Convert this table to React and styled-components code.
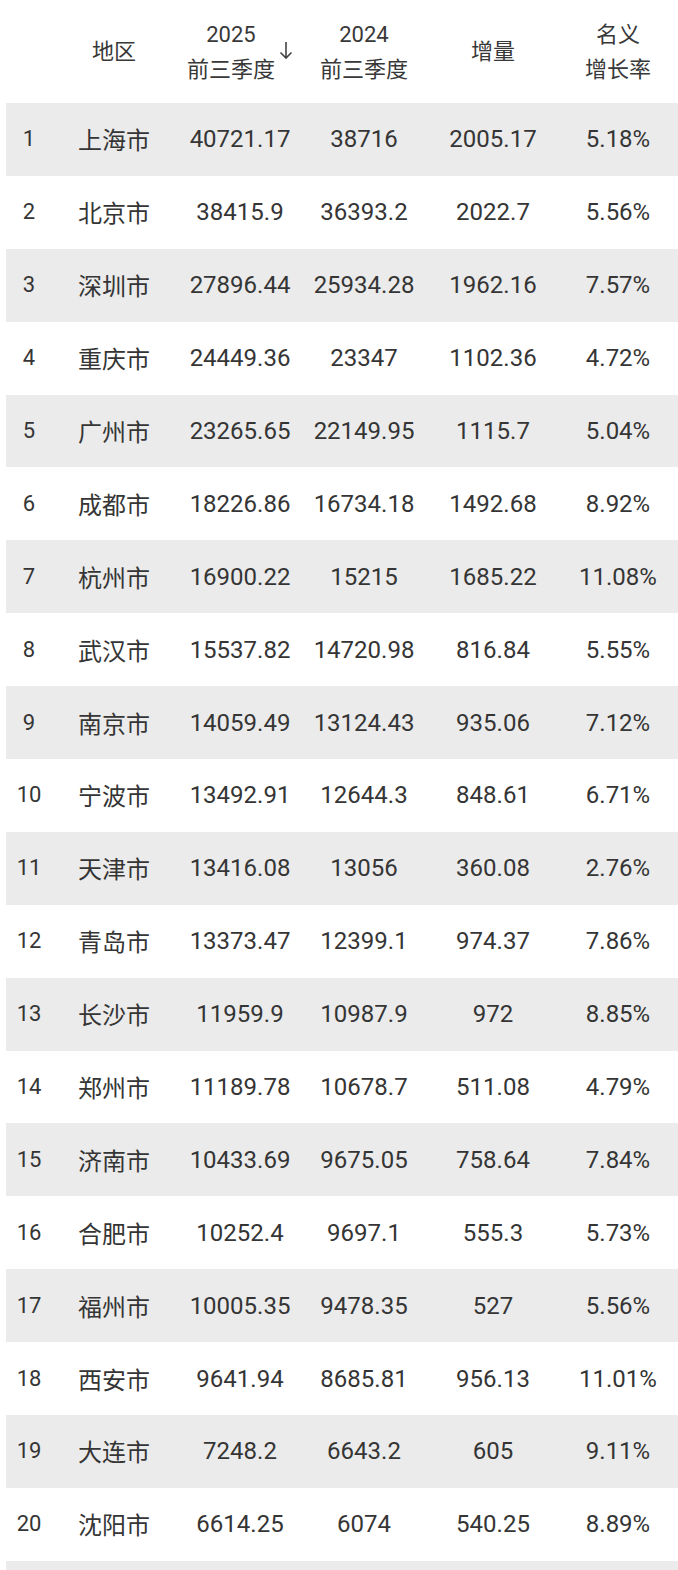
import styled, { createGlobalStyle } from "styled-components";

const GlobalStyle = createGlobalStyle`
  body {
    margin: 0;
    background: #fff;
    font-family: Roboto, "Noto Sans CJK SC", sans-serif;
    color: #353535;
  }
`;

const rows = [
  ["1", "上海市", "40721.17", "38716", "2005.17", "5.18%"],
  ["2", "北京市", "38415.9", "36393.2", "2022.7", "5.56%"],
  ["3", "深圳市", "27896.44", "25934.28", "1962.16", "7.57%"],
  ["4", "重庆市", "24449.36", "23347", "1102.36", "4.72%"],
  ["5", "广州市", "23265.65", "22149.95", "1115.7", "5.04%"],
  ["6", "成都市", "18226.86", "16734.18", "1492.68", "8.92%"],
  ["7", "杭州市", "16900.22", "15215", "1685.22", "11.08%"],
  ["8", "武汉市", "15537.82", "14720.98", "816.84", "5.55%"],
  ["9", "南京市", "14059.49", "13124.43", "935.06", "7.12%"],
  ["10", "宁波市", "13492.91", "12644.3", "848.61", "6.71%"],
  ["11", "天津市", "13416.08", "13056", "360.08", "2.76%"],
  ["12", "青岛市", "13373.47", "12399.1", "974.37", "7.86%"],
  ["13", "长沙市", "11959.9", "10987.9", "972", "8.85%"],
  ["14", "郑州市", "11189.78", "10678.7", "511.08", "4.79%"],
  ["15", "济南市", "10433.69", "9675.05", "758.64", "7.84%"],
  ["16", "合肥市", "10252.4", "9697.1", "555.3", "5.73%"],
  ["17", "福州市", "10005.35", "9478.35", "527", "5.56%"],
  ["18", "西安市", "9641.94", "8685.81", "956.13", "11.01%"],
  ["19", "大连市", "7248.2", "6643.2", "605", "9.11%"],
  ["20", "沈阳市", "6614.25", "6074", "540.25", "8.89%"],
  ["", "", "", "", "", ""],
];

const Table = styled.div`
  padding-left: 6px;
`;

const Grid = styled.div`
  display: grid;
  grid-template-columns: 46px 124px 128px 120px 138px 112px;
  align-items: center;
`;

const Head = styled(Grid)`
  height: 103px;
`;

const HeadCell = styled.div`
  display: flex;
  justify-content: center;
  align-items: center;
  font-size: 22px;
  line-height: 35px;
  text-align: center;
  color: #383838;
`;

const Stack = styled.div`
  display: flex;
  flex-direction: column;
  align-items: center;
`;

const SortArrow = styled.svg`
  width: 14px;
  height: 19px;
  margin-left: 4px;
  margin-top: -3px;
  flex: none;
`;

const Row = styled(Grid)`
  height: 72.9px;
  background: ${(p) => (p.$shaded ? "#ebebeb" : "#fff")};
`;

const Cell = styled.div`
  text-align: center;
  line-height: 1;
  font-size: ${(p) => (p.$small ? "22px" : "24px")};
  font-family: ${(p) =>
    p.$cjk ? '"Noto Sans CJK SC", sans-serif' : 'Roboto, "Noto Sans CJK SC", sans-serif'};
  white-space: nowrap;
`;

export default function App() {
  return (
    <Table>
      <GlobalStyle />
      <Head>
        <HeadCell />
        <HeadCell>地区</HeadCell>
        <HeadCell>
          <Stack>
            <span>2025</span>
            <span>前三季度</span>
          </Stack>
          <SortArrow viewBox="0 0 14 19" fill="none" stroke="#444" strokeWidth="1.6">
            <path d="M7 1v16M1.5 11.5L7 17l5.5-5.5" />
          </SortArrow>
        </HeadCell>
        <HeadCell>
          <Stack>
            <span>2024</span>
            <span>前三季度</span>
          </Stack>
        </HeadCell>
        <HeadCell>增量</HeadCell>
        <HeadCell>
          <Stack>
            <span>名义</span>
            <span>增长率</span>
          </Stack>
        </HeadCell>
      </Head>
      {rows.map((r, i) => (
        <Row key={i} $shaded={i % 2 === 0}>
          <Cell $small>{r[0]}</Cell>
          <Cell $cjk>{r[1]}</Cell>
          <Cell>{r[2]}</Cell>
          <Cell>{r[3]}</Cell>
          <Cell>{r[4]}</Cell>
          <Cell>{r[5]}</Cell>
        </Row>
      ))}
    </Table>
  );
}
